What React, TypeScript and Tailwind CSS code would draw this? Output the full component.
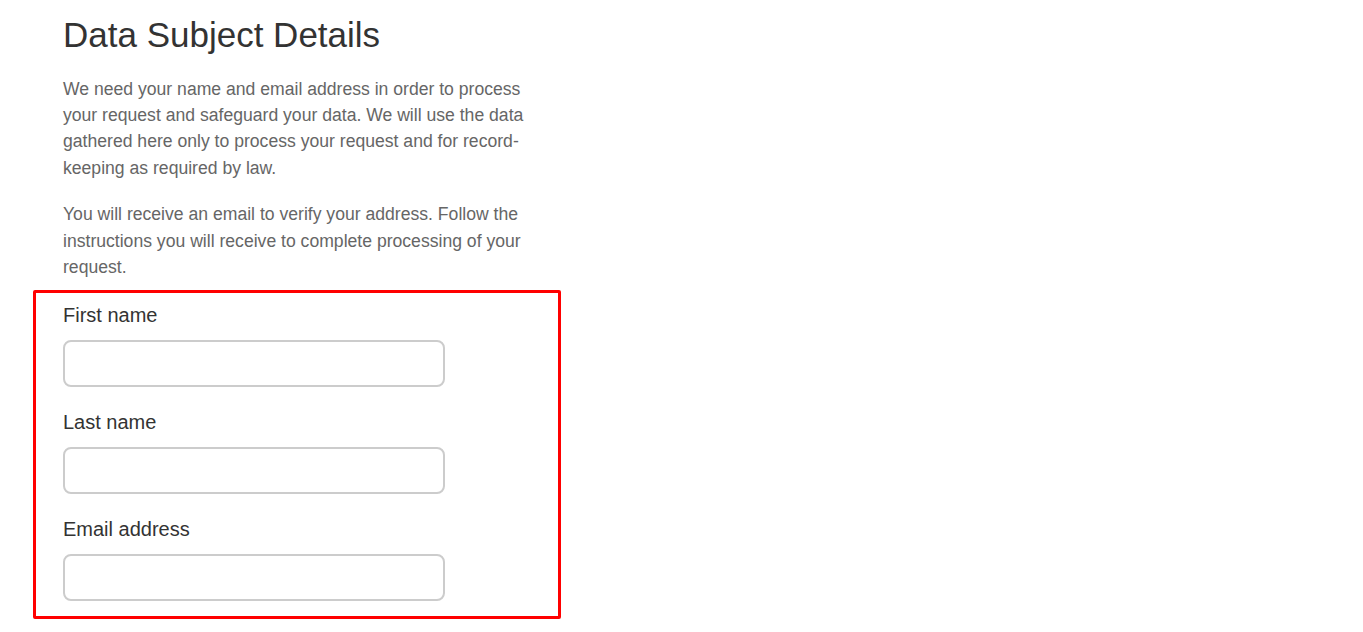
import React from 'react';

const fields = [
  { id: 'firstName', label: 'First name', type: 'text' },
  { id: 'lastName', label: 'Last name', type: 'text' },
  { id: 'email', label: 'Email address', type: 'email' },
];

const App: React.FC = () => {
  return (
    <div className="min-h-screen bg-white font-['Liberation_Sans',Arial,sans-serif]">
      <div className="px-[33px] pt-[16px]">
        <div className="w-[492px] pl-[30px]">
          <h2 className="text-[35px] leading-[1.1] text-[#333]">Data Subject Details</h2>
          <p className="mt-[21px] text-[17.6px] leading-[26.4px] text-[#666]">
            We need your name and email address in order to process your request and safeguard your
            data. We will use the data gathered here only to process your request and for
            record-keeping as required by law.
          </p>
          <p className="mt-[20px] text-[17.6px] leading-[26.4px] text-[#666]">
            You will receive an email to verify your address. Follow the instructions you will
            receive to complete processing of your request.
          </p>
        </div>

        <form className="mt-[10px] w-[528px] rounded-[2px] border-[3px] border-[#ff0000] pl-[27px] pt-[7px] pb-[15px]">
          <div className="flex flex-col gap-[20px]">
            {fields.map((field) => (
              <div key={field.id} className="flex flex-col">
                <label htmlFor={field.id} className="mb-[10px] text-[20px] leading-[30px] text-[#333]">
                  {field.label}
                </label>
                <input
                  id={field.id}
                  type={field.type}
                  className="h-[47px] w-[382px] rounded-[8px] border-2 border-[#cccccc] bg-white px-3 text-[17.6px] text-[#333] outline-none"
                />
              </div>
            ))}
          </div>
        </form>
      </div>
    </div>
  );
};

export default App;
